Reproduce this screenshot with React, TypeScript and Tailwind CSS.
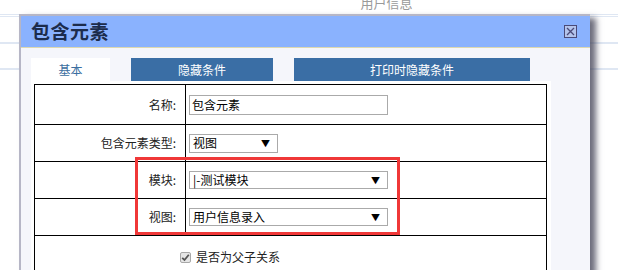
import React from 'react';

const font = { fontFamily: '"Noto Sans CJK SC", "Noto Sans", sans-serif' };

function Caret() {
  return <span className="text-[9px] leading-none text-black">▼</span>;
}

function Row({ label, children, h }: { label: string; children: React.ReactNode; h: string }) {
  return (
    <div className={`flex border-t border-black first:border-t-0 ${h}`}>
      <div className="w-[151px] shrink-0 border-r border-black flex items-center justify-end pr-[9px] text-[12px] text-[#222]">
        {label}
      </div>
      <div className="flex items-center pl-[3px]">{children}</div>
    </div>
  );
}

export default function App() {
  return (
    <div className="relative w-[618px] h-[270px] overflow-hidden bg-white" style={font}>
      {/* page behind the dialog */}
      <div className="h-[14px] flex justify-center">
        <span className="text-[13px] leading-none text-[#9a9a9a] -mt-[4px] ml-[155px]">用户信息</span>
      </div>
      <div className="border-t border-[#dfe7f3] h-[2px]" />
      <div className="border-t border-[#dfe7f3] h-[26px]" />
      <div className="border-t-2 border-[#dfe7f3] h-[26px]" />
      <div className="border-t-2 border-[#dfe7f3]" />

      {/* dialog */}
      <div className="absolute left-[19px] top-[14px] w-[571px] h-[300px] border-t-2 border-l-2 border-[#b6b6c6] bg-[#f5f6fb] shadow-[6px_4px_6px_rgba(60,60,80,0.75)]">
        <div className="h-[32px] bg-[#8ab2fe] flex items-center justify-between pl-[10px] pr-[13px] border-b border-[#ddd8b0]">
          <span className="text-[19px] font-bold text-[#1c2c4c] tracking-[0.5px]">包含元素</span>
          <span className="w-[13px] h-[13px] border border-[#4a4a78] bg-[#b4c4ec] flex items-center justify-center">
            <svg width="9" height="9" viewBox="0 0 9 9">
              <path d="M1 1L8 8M8 1L1 8" stroke="#4a4a78" strokeWidth="1.3" />
            </svg>
          </span>
        </div>

        <div className="pl-[10px] pt-[10px]">
          <div className="flex gap-[21px] h-[23px] text-[12px]">
            <div className="w-[79px] bg-white text-[#3b6ea0] flex items-center justify-center">基本</div>
            <div className="w-[142px] bg-[#3a6ea5] text-white flex items-center justify-center">隐藏条件</div>
            <div className="w-[236px] bg-[#3a6ea5] text-white flex items-center justify-center">打印时隐藏条件</div>
          </div>

          <div className="w-[520px] bg-white pt-[3px] pl-[3px] h-[200px]">
            <div className="relative w-[513px] border-x border-t border-black">
              <Row label="名称:" h="h-[39px]">
                <div className="w-[199px] h-[20px] border border-[#aaa] text-[12px] text-black flex items-center pl-[2px]">包含元素</div>
              </Row>
              <Row label="包含元素类型:" h="h-[37px]">
                <div className="w-[89px] h-[19px] border border-[#aaa] text-[12px] text-black flex items-center justify-between pl-[3px] pr-[7px]">
                  <span>视图</span>
                  <Caret />
                </div>
              </Row>
              <Row label="模块:" h="h-[37px]">
                <div className="w-[199px] h-[18px] border border-[#aaa] text-[12px] text-black flex items-center justify-between pl-[3px] pr-[7px]">
                  <span>|-测试模块</span>
                  <Caret />
                </div>
              </Row>
              <Row label="视图:" h="h-[37px]">
                <div className="w-[199px] h-[18px] border border-[#aaa] text-[12px] text-black flex items-center justify-between pl-[3px] pr-[7px]">
                  <span>用户信息录入</span>
                  <Caret />
                </div>
              </Row>
              <div className="border-t border-black h-[40px] pl-[145px] pt-[12px]">
                <div className="flex items-center gap-[5px] text-[12px] text-[#222]">
                  <span className="w-[11px] h-[11px] rounded-[2px] border border-[#a8a8a8] bg-[#e6e6e6] flex items-center justify-center">
                    <svg width="9" height="9" viewBox="0 0 9 9">
                      <path d="M1.2 4.8L3.5 7L7.8 1.8" stroke="#555" strokeWidth="1.8" fill="none" />
                    </svg>
                  </span>
                  <span>是否为父子关系</span>
                </div>
                <div className="mt-[6px] w-[11px] h-[11px] rounded-[2px] border border-[#a8a8a8] bg-[#e6e6e6]" />
              </div>

              <div className="absolute left-[100px] top-[72px] w-[265px] h-[78px] border-[3px] border-[#f03838]" />
            </div>
          </div>
        </div>
      </div>
    </div>
  );
}
